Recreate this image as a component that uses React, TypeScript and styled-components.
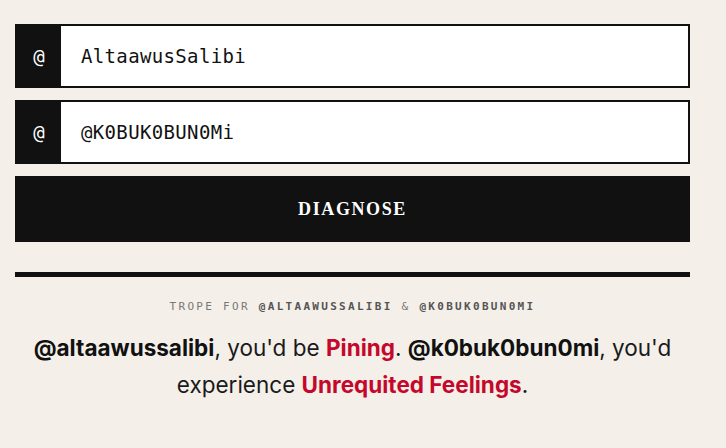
import styled, { createGlobalStyle } from "styled-components";

const GlobalStyle = createGlobalStyle`
  html, body { margin: 0; padding: 0; background: #f4f0e9; }
  body { font-family: Inter, "Noto Sans", sans-serif; color: #111; }
`;

const Page = styled.main`
  width: 675px;
  margin-left: 15px;
  padding-top: 24px;
`;

const Form = styled.form`
  display: flex; flex-direction: column; gap: 12px;
`;

const Field = styled.label`
  display: flex;
  height: 64px;
  box-sizing: border-box;
  border: 2px solid #111;
  background: #fff;
`;

const Prefix = styled.span`
  width: 44px; flex-shrink: 0;
  display: flex; align-items: center; justify-content: center;
  background: #111; color: #fff;
  font: 400 19px/1 "DejaVu Sans Mono", monospace;
`;

const Input = styled.input`
  flex: 1; min-width: 0;
  border: 0; outline: none; background: transparent;
  padding: 0 20px;
  font: 400 19px/1 "DejaVu Sans Mono", monospace;
  letter-spacing: 0.35px;
  color: #111;
`;

const Button = styled.button`
  height: 66px;
  border: 0;
  background: #111; color: #fff;
  font: 700 18px/1 "Liberation Serif", serif;
  letter-spacing: 1.6px;
  cursor: pointer;
`;

const Rule = styled.hr`
  margin: 30px 0 0;
  border: 0;
  border-top: 5px solid #111;
`;

const Result = styled.section`
  padding-top: 22px;
  text-align: center;
`;

const Kicker = styled.p`
  margin: 0;
  font: 400 11px/16px "DejaVu Sans Mono", monospace;
  letter-spacing: 2.3px;
  color: #777;
  b { color: #555; font-weight: 700; }
`;

const Verdict = styled.p`
  margin: 14px 0 0;
  font-size: 22.5px;
  line-height: 37px;
  color: #1a1a1a;
  strong { font-weight: 700; color: #111; }
`;

const Trope = styled.strong`
  && { color: #c4082b; }
`;

export default function App() {
  return (
    <Page>
      <GlobalStyle />
      <Form onSubmit={(e) => e.preventDefault()}>
        <Field>
          <Prefix>@</Prefix>
          <Input defaultValue="AltaawusSalibi" />
        </Field>
        <Field>
          <Prefix>@</Prefix>
          <Input defaultValue="@K0BUK0BUN0Mi" />
        </Field>
        <Button type="submit">DIAGNOSE</Button>
      </Form>
      <Rule />
      <Result>
        <Kicker>TROPE FOR <b>@ALTAAWUSSALIBI</b> &amp; <b>@K0BUK0BUN0MI</b></Kicker>
        <Verdict>
          <strong>@altaawussalibi</strong>, you'd be <Trope>Pining</Trope>. <strong>@k0buk0bun0mi</strong>, you'd experience <Trope>Unrequited Feelings</Trope>.
        </Verdict>
      </Result>
    </Page>
  );
}
